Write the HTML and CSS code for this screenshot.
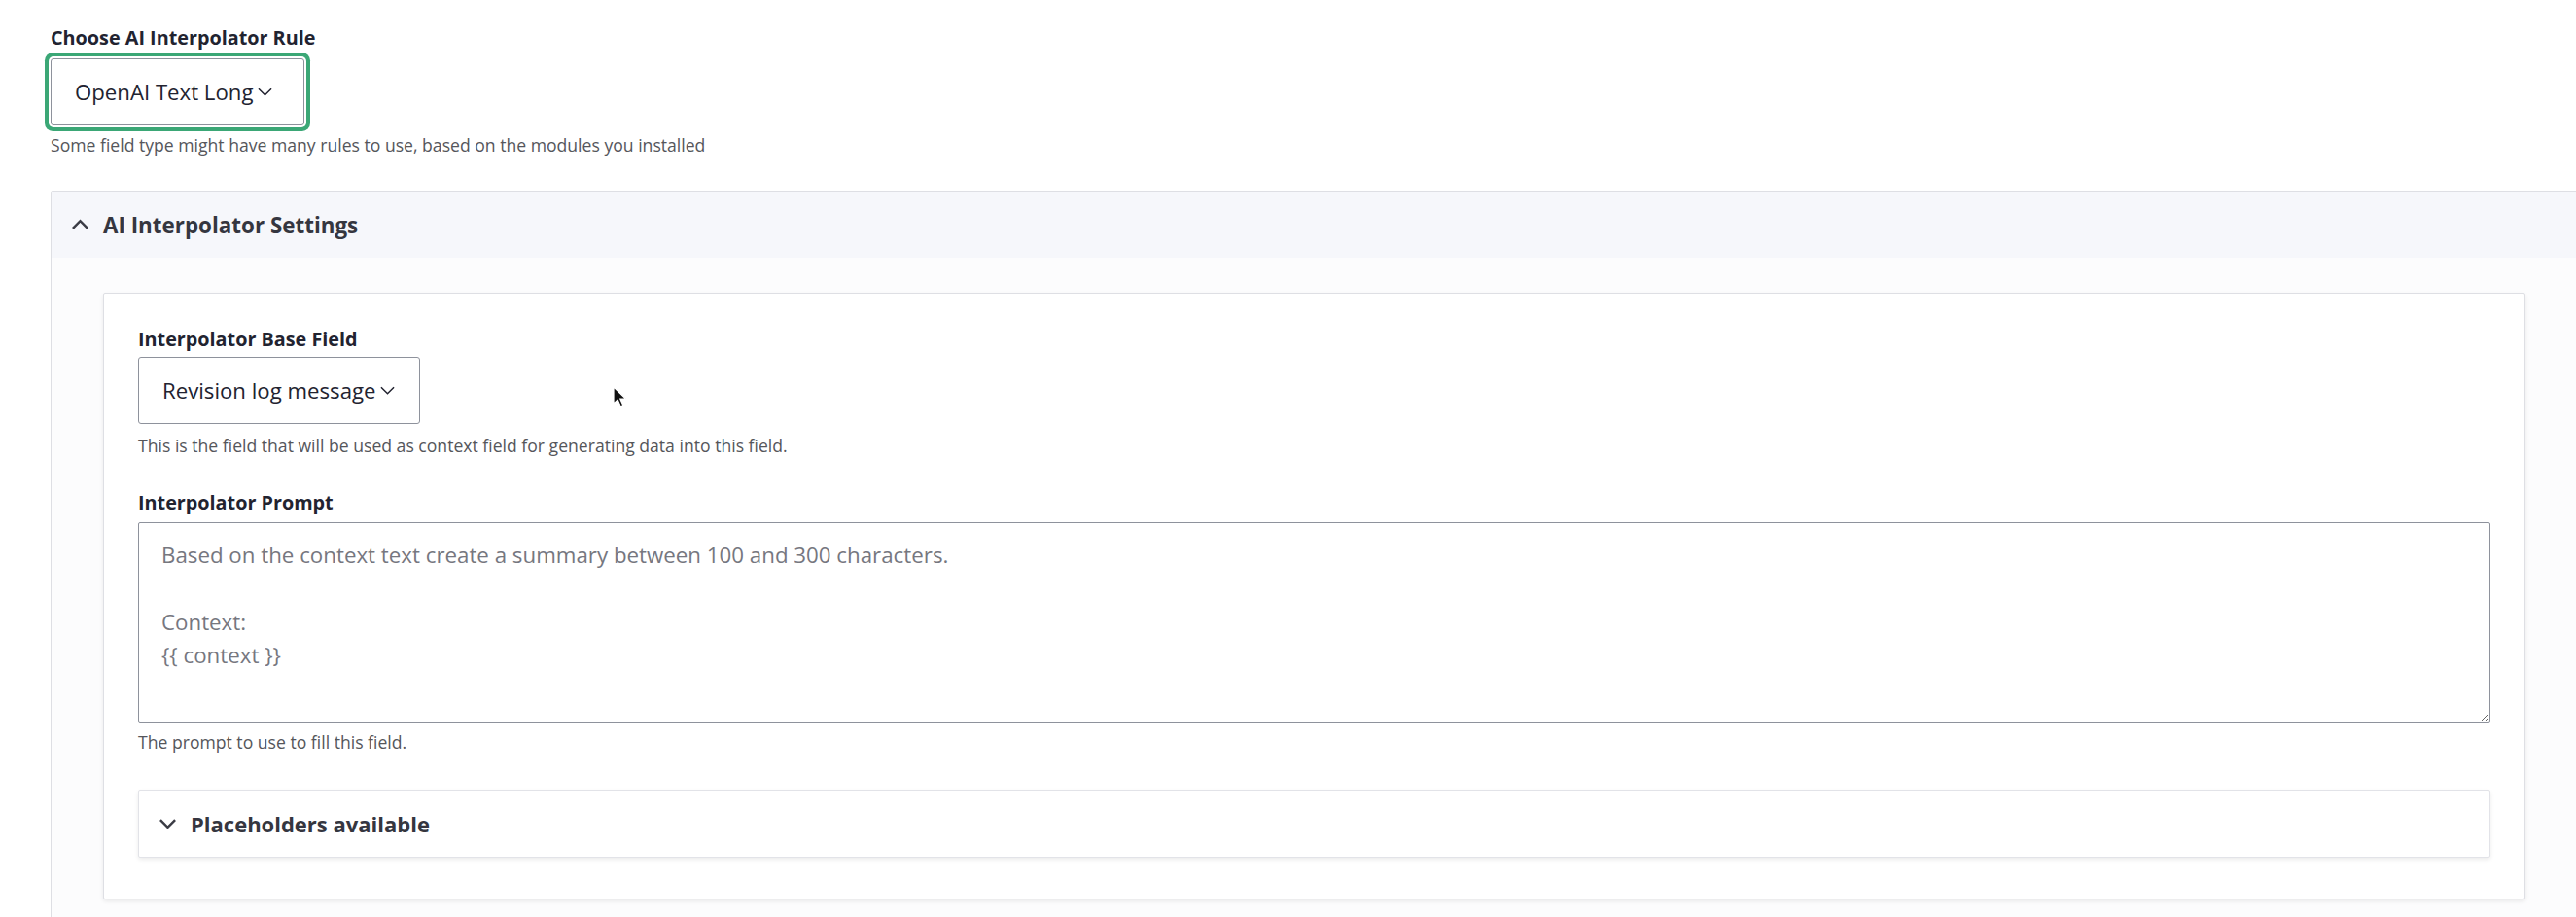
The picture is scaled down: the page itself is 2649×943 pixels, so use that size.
FILE: index.html
```html
<!DOCTYPE html>
<html>
    <head>
        <link rel="stylesheet" href="styles.css">
    </head>
    <body>
        <div class="page">
            <!-- rule picker -->
            <div class="form-item">
                <label class="form-label">Choose AI Interpolator Rule</label>
                <div class="select select-focused">
                    <span>OpenAI Text Long</span>
                    <svg class="select-arrow" viewBox="0 0 16 9"><path d="M1 1l7 7 7-7"/></svg>
                </div>
                <div class="description">Some field type might have many rules to use, based on the modules you installed</div>
            </div>

            <details class="settings" open>
                <summary class="settings-summary">
                    <svg class="summary-arrow" viewBox="0 0 20 12"><path d="M2 10l8-8 8 8"/></svg>
                    AI Interpolator Settings
                </summary>
                <div class="settings-body">
                    <div class="panel">
                        <div class="form-item">
                            <label class="form-label">Interpolator Base Field</label>
                            <div class="select select-base">
                                <span>Revision log message</span>
                                <svg class="select-arrow" viewBox="0 0 16 9"><path d="M1 1l7 7 7-7"/></svg>
                            </div>
                            <div class="description">This is the field that will be used as context field for generating data into this field.</div>
                        </div>

                        <div class="form-item prompt-item">
                            <label class="form-label">Interpolator Prompt</label>
                            <textarea class="prompt" placeholder="Based on the context text create a summary between 100 and 300 characters.&#10;&#10;Context:&#10;{{ context }}"></textarea>
                            <div class="description">The prompt to use to fill this field.</div>
                        </div>

                        <details class="placeholders">
                            <summary class="placeholders-summary">
                                <svg class="summary-arrow" viewBox="0 0 20 12"><path d="M2 2l8 8 8-8"/></svg>
                                Placeholders available
                            </summary>
                        </details>
                    </div>
                </div>
            </details>
        </div>

        <!-- mouse pointer -->
        <svg class="pointer" viewBox="0 0 14 22">
            <path d="M1 1v17l4.2-4 3 6.8 2.6-1.1-3-6.6h5.7z" fill="#111" stroke="#fff" stroke-width="1.2"/>
        </svg>
    </body>
</html>
```

FILE: styles.css
```css
body {
    margin: 0;
    background-color: #fff;
    font-family: "Open Sans", "Noto Sans", sans-serif;
    color: #222330;
    overflow: hidden;
}
.page {
    padding: 26px 0 0 52px;
}
.form-label {
    display: block;
    font-size: 19.8px;
    line-height: 26px;
    font-weight: 700;
    color: #222330;
}
.description {
    font-size: 17.6px;
    line-height: 24px;
    color: #55565b;
    margin-top: 8px;
}

/* fake select boxes */
.select {
    display: inline-flex;
    align-items: center;
    box-sizing: border-box;
    height: 69px;
    margin-top: 8px;
    padding: 0 22px 0 24px;
    border: 1px solid #8e929c;
    border-radius: 3px;
    font-size: 22.2px;
    color: #222330;
    background: #fff;
}
.select-focused {
    width: 261px;
    box-shadow: 0 0 0 2px #fff, 0 0 0 6px #3ba776;
}
.select-base {
    width: 290px;
    margin-top: 5px;
}
.select-arrow {
    flex: none;
    width: 15px;
    height: 9px;
    margin-left: 5px;
    fill: none;
    stroke: #222330;
    stroke-width: 1.6;
}

/* collapsible sections */
summary {
    list-style: none;
    cursor: pointer;
}
summary::-webkit-details-marker {
    display: none;
}
.summary-arrow {
    width: 19px;
    height: 12px;
    margin-right: 14px;
    fill: none;
    stroke: #3b3c45;
    stroke-width: 2.6;
}
.settings {
    margin-top: 35px;
    width: 2598px;
    border: 1px solid #dedfe4;
    border-radius: 2px;
    background-color: #fcfcfd;
}
.settings-summary,
.placeholders-summary {
    display: flex;
    align-items: center;
    height: 68px;
    padding-left: 20px;
    font-size: 22px;
    font-weight: 700;
    color: #35363f;
}
.settings-summary {
    background-color: #f6f7fb;
    font-size: 22.4px;
}
.settings-body {
    padding: 36px 52px 40px 53px;
}
.panel {
    width: 2491px;
    box-sizing: border-box;
    padding: 34px 35px 42px 35px;
    border: 1px solid #dedfe4;
    border-radius: 2px;
    background-color: #fff;
    box-shadow: 0 2px 4px rgba(0, 0, 0, 0.08);
}
.panel .description {
    margin-top: 10px;
}
.prompt-item {
    margin-top: 34px;
}
.prompt {
    display: block;
    box-sizing: border-box;
    width: 100%;
    height: 206px;
    margin-top: 7px;
    padding: 16px 23px;
    border: 1px solid #8e929c;
    border-radius: 2px;
    font-family: inherit;
    font-size: 22.3px;
    line-height: 34.3px;
    color: #222330;
    resize: vertical;
}
.prompt::placeholder {
    color: #76777f;
}
.prompt-item .description {
    margin-top: 8px;
}
.placeholders {
    margin-top: 37px;
    border: 1px solid #e2e3e8;
    border-radius: 2px;
    background-color: #fff;
    box-shadow: 0 2px 4px rgba(0, 0, 0, 0.08);
}

.pointer {
    position: absolute;
    left: 630px;
    top: 397px;
    width: 14px;
    height: 22px;
}
```
